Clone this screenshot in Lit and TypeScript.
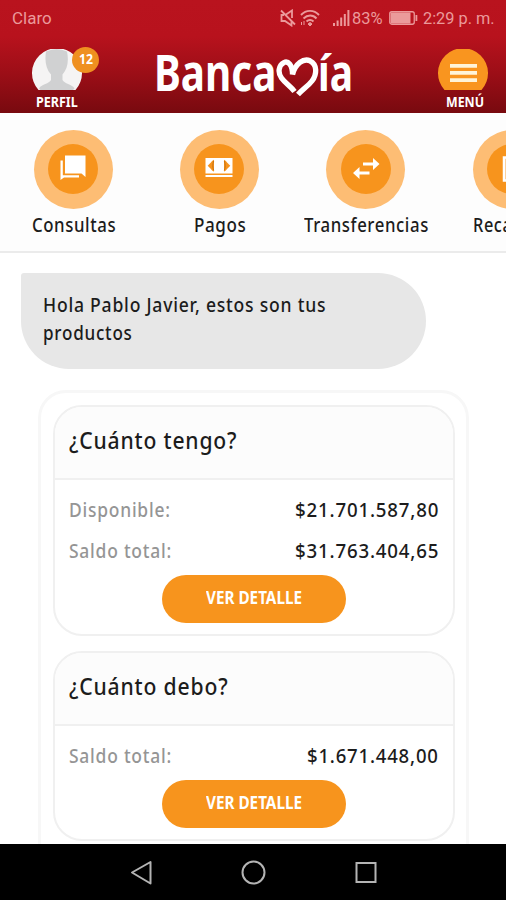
import { LitElement, html, css, svg } from "lit";
import { customElement, property, query } from "lit/decorators.js";

/** One line of text condensed horizontally to a set width. */
@customElement("fit-text")
class FitText extends LitElement {
  @property() text = "";
  @property({ type: Number }) w = 100;
  @query("span") span!: HTMLSpanElement;

  static styles = css`
    :host { display: block; white-space: nowrap; flex: none; }
    span { display: inline-block; transform-origin: 0 50%; vertical-align: top; }
  `;

  updated() {
    this.style.width = `${this.w}px`;
    const natural = this.span.offsetWidth;
    if (natural) this.span.style.transform = `scaleX(${this.w / natural})`;
  }

  render() {
    return html`<span>${this.text}</span>`;
  }
}

const actions = [
  {
    label: "Consultas", w: 84,
    icon: svg`<path d="M17 11.500h20.500V33l-4-3.500H17z" fill="#fff"/><path d="M12.500 16.500h2.300V31.300H31v2.300H16l-3.500 2.400z" fill="#fff"/>`,
  },
  {
    label: "Pagos", w: 52,
    icon: svg`<path d="M11.500 14h27v15.500h-27zM11.500 31h27v2h-27z" fill="#fff"/><path d="M20 15.800v11.800c-2.500-1-2.500-2.500-6.300-5.900 3.800-3 3.800-4.900 6.300-5.900zM30 15.800v11.800c2.500-1 2.500-2.500 6.300-5.900-3.800-3-3.800-4.900-6.300-5.900z" fill="#f7941d"/><path d="M19.700 17c-1.200 2.800-1.200 6.600 0 9.400M30.300 17c1.200 2.800 1.200 6.600 0 9.400" stroke="#c97310" fill="none"/>`,
  },
  {
    label: "Transferencias", w: 125,
    icon: svg`<path d="M22 18.600h10v-4.600l6.500 6-6.500 6v-4.600H22zM28.500 27.400h-10V23L12 29l6.500 6v-4.600h10z" fill="#fff"/>`,
  },
  {
    label: "Recaudos", w: 80,
    icon: svg`<path d="M17 13.500h17v23H17z" fill="#fbc27d" stroke="#fff" stroke-width="2.500"/>`,
  },
];

const cards = [
  {
    title: "¿Cuánto tengo?", w: 168,
    rows: [
      { label: "Disponible:", lw: 102, value: "$21.701.587,80", vw: 144 },
      { label: "Saldo total:", lw: 103, value: "$31.763.404,65", vw: 144 },
    ],
  },
  {
    title: "¿Cuánto debo?", w: 159,
    rows: [{ label: "Saldo total:", lw: 103, value: "$1.671.448,00", vw: 132 }],
  },
];

@customElement("app-root")
class AppRoot extends LitElement {
  static styles = css`
    :host {
      display: flex; flex-direction: column; width: 506px; height: 900px;
      overflow: hidden; background: #fff; color: #1c1c1c;
      font-family: "Noto Sans", "Open Sans", sans-serif; font-weight: 500;
    }
    svg { display: block; flex: none; }
    .top {
      height: 112.500px; flex: none; box-sizing: border-box;
      background: linear-gradient(#b9131e 0%, #b8121d 32%, #9c0e17 65%, #780a0f 100%);
    }
    .status {
      height: 36px; box-sizing: border-box; padding: 0 11px 0 12px;
      display: flex; align-items: center; color: #eb9a9b;
      font: 400 17px/36px Roboto, sans-serif;
    }
    .status .grow { flex: 1; }
    .mute { margin-right: 4px; }
    .wifi { margin-right: 13px; }
    .signal { margin-right: 2px; }
    .battery { margin: 0 5px 0 6px; }
    .brandbar { display: flex; height: 76px; padding: 0 18px 0 32px; }
    .side { position: relative; width: 50px; padding-top: 13px; color: #fff; font-weight: 700; font-size: 14px; line-height: 16px; }
    .side svg { height: 42px; }
    .side fit-text { margin: 3px 0 0 4px; }
    .menu { margin-left: auto; }
    .menu fit-text { margin-left: 8px; }
    .badge {
      position: absolute; left: 40px; top: 11px; width: 27px; height: 26px; border-radius: 50%;
      background: #ef9020; display: flex; justify-content: center; line-height: 23px; font-size: 14px;
    }
    .badge fit-text { margin: 0; }
    .logo { display: flex; color: #fff; font-weight: 700; font-size: 50px; line-height: 60px; margin: 6px 0 0 72px; }
    .logo svg { margin: 13px 0 0 0; }
    .logo fit-text:last-child { margin-left: -1px; }
    .actions {
      display: flex; flex: none; height: 140.500px; box-sizing: border-box; overflow: hidden;
      padding-top: 17px; background: #fdfdfd; border-bottom: 2px solid #ebebeb;
    }
    .action { width: 146.300px; flex: none; display: flex; flex-direction: column; align-items: center; font-size: 20px; line-height: 28px; letter-spacing: .7px; }
    .action fit-text { margin-left: 1px; }
    .ring {
      width: 79px; height: 79px; border-radius: 50%; background: #fdbd74;
      display: flex; align-items: center; justify-content: center; margin-bottom: 2px;
    }
    .disc { width: 50px; height: 50px; border-radius: 50%; background: #f7941d; }
    .content { flex: 1; min-height: 0; overflow: hidden; padding: 20px 0 0; }
    .bubble {
      width: 405px; height: 96px; margin-left: 21px; box-sizing: border-box; padding: 17px 22px;
      background: #e7e7e7; border-radius: 3px 48px 48px 48px; font-size: 20.500px; line-height: 28px; letter-spacing: .9px;
    }
    .products {
      margin: 20.500px 0 0 38px; width: 431px; height: 520px; box-sizing: border-box;
      border: 3px solid #f7f7f7; border-radius: 28px; padding: 12px;
      display: flex; flex-direction: column; gap: 15px;
    }
    .card { border: 2px solid #f0f0f0; border-radius: 29px; flex: none; margin-right: -1px; overflow: hidden; letter-spacing: .9px; }
    .card-head {
      height: 73px; box-sizing: border-box; padding: 18px 0 0 14px; background: #fcfcfc;
      border-bottom: 2px solid #f0f0f0; font-size: 23px; line-height: 30px;
    }
    .card-body { padding: 9px 14px 11px 14px; display: flex; flex-direction: column; }
    .row { display: flex; justify-content: space-between; font-size: 20.500px; line-height: 41px; height: 41px; }
    .row .label { color: #959595; }
    .btn {
      align-self: center; width: 184px; height: 48px; margin: 4px 1px 0 0; border: 0; border-radius: 24px; padding: 0 0 1px;
      background: #f7941d; color: #fff; display: flex; justify-content: center;
      font: 700 17px/45px "Noto Sans", sans-serif;
    }
    .nav { height: 56px; flex: none; background: #000; }
  `;

  private renderCard(c: (typeof cards)[number]) {
    return html`
      <section class="card">
        <div class="card-head"><fit-text .text=${c.title} .w=${c.w}></fit-text></div>
        <div class="card-body">
          ${c.rows.map(
            (r) => html`<div class="row">
              <fit-text class="label" .text=${r.label} .w=${r.lw}></fit-text>
              <fit-text .text=${r.value} .w=${r.vw}></fit-text>
            </div>`
          )}
          <button class="btn"><fit-text .text=${"VER DETALLE"} .w=${96}></fit-text></button>
        </div>
      </section>
    `;
  }

  render() {
    return html`
      <header class="top">
        <div class="status">
          <fit-text .text=${"Claro"} .w=${40}></fit-text>
          <span class="grow"></span>
          <svg class="mute" width="16" height="18" viewBox="0 0 16 18" fill="none" stroke="#eb9a9b" stroke-width="1.800">
            <path d="M1 1.500l14 14M4 6H1.500v6H5l6.500 4.500V12M6 5.500l6-4v7.500" />
          </svg>
          <svg class="wifi" width="20" height="18" viewBox="0 0 20 18" fill="none" stroke="#eb9a9b" stroke-width="1.900">
            <path d="M1 6c5-5.500 13-5.500 18 0M3.500 9.500c4-4 9.500-4 13 0M6.500 12.500c2-2 5-2 7 0" />
            <path d="M10 13.500l2 1.500-2 2-2-2zM1.500 16v-3M4 16v-4" fill="#eb9a9b" stroke-width="1" />
          </svg>
          <svg class="signal" width="17" height="16" viewBox="0 0 17 16" fill="#eb9a9b">
            <path d="M0 13h2v3H0zM3.600 10.500h2V16h-2zM7.200 7.500h2V16h-2zM10.800 4h2v12h-2zM14.400 0h2v16h-2z" />
          </svg>
          <fit-text .text=${"83%"} .w=${31}></fit-text>
          <svg class="battery" width="29" height="16" viewBox="0 0 29 16">
            <rect x=".75" y="1.750" width="24.500" height="12.500" rx="2" fill="none" stroke="#eb9a9b" stroke-width="1.300" />
            <path d="M1.500 2.500h20v11h-20zM26.500 5h1.800v6h-1.800z" fill="#eb9a9b" />
          </svg>
          <fit-text .text=${"2:29 p. m."} .w=${72}></fit-text>
        </div>
        <div class="brandbar">
          <div class="side">
            <svg width="50" height="42" viewBox="0 0 50 42">
              <path d="M6.500 41A25 25 0 1 1 43.500 41z" fill="#f5f4f4" />
              <path d="M14 2.500Q25-2 35 2.500C37 12 35.500 20 30.500 25.500V31c2 4 9 3.500 12 8.500l-1.500 1.500H8.500L7 39.500c3-5 10-4.500 12-8.500v-5.500C14 20 12.500 12 14 2.500z" fill="#d0d1d2" />
            </svg>
            <fit-text .text=${"PERFIL"} .w=${42}></fit-text>
            <div class="badge"><fit-text .text=${"12"} .w=${14}></fit-text></div>
          </div>
          <div class="logo">
            <fit-text .text=${"Banca"} .w=${122}></fit-text>
            <svg width="43" height="44" viewBox="0 0 43 44" fill="none" stroke="#fff" stroke-width="5.300">
              <path d="M16.500 19.500C16.500 10 12 5.500 8 7.500C2.500 10.500 1.500 17.500 5.500 23C9.500 28.500 14.500 31 18.500 36.500" />
              <path d="M16.500 19.500C19.500 8.500 27.500 3 34 5.800C41.500 9.500 41 19.500 36 26C32 31 26.500 34.500 22 39.500" />
            </svg>
            <fit-text .text=${"ía"} .w=${35}></fit-text>
          </div>
          <div class="side menu">
            <svg width="50" height="42" viewBox="0 0 50 42">
              <path d="M6.500 41A25 25 0 1 1 43.500 41z" fill="#f9951f" />
              <path d="M12 15h27v3.800H12zM12 22h27v3.800H12zM12 29.200h27V33H12z" fill="#fff4d8" />
            </svg>
            <fit-text .text=${"MENÚ"} .w=${38}></fit-text>
          </div>
        </div>
      </header>

      <nav class="actions">
        ${actions.map(
          (a) => html`<div class="action">
            <div class="ring"><div class="disc"><svg width="50" height="50" viewBox="0 0 50 50">${a.icon}</svg></div></div>
            <fit-text .text=${a.label} .w=${a.w}></fit-text>
          </div>`
        )}
      </nav>

      <main class="content">
        <div class="bubble">
          <fit-text .text=${"Hola Pablo Javier, estos son tus"} .w=${283}></fit-text>
          <fit-text .text=${"productos"} .w=${90}></fit-text>
        </div>
        <div class="products">${cards.map((c) => this.renderCard(c))}</div>
      </main>

      <footer class="nav">
        <svg width="506" height="56" viewBox="0 0 506 56" fill="none" stroke="#b4b4b4" stroke-width="2">
          <path d="M150.500 18v21.500L132 28.500z" stroke-linejoin="round" />
          <circle cx="253.500" cy="28.500" r="11" />
          <rect x="356.500" y="19" width="19" height="19" />
        </svg>
      </footer>
    `;
  }
}
